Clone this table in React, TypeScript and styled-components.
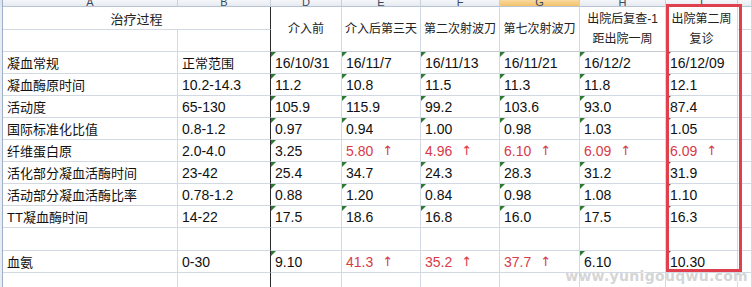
import React from "react";
import styled, { createGlobalStyle, css } from "styled-components";

const Global = createGlobalStyle`
  html, body { margin: 0; padding: 0; background: #fff; }
  body { font-family: "Liberation Sans", "Noto Sans CJK SC", sans-serif; }
`;

const GRID = "#d3d9e3";

const Sheet = styled.div`
  position: relative;
  display: grid;
  grid-template-columns: 3px 175px 93px 71px 79px 79px 80px 86px 72px 1fr;
  grid-template-rows: 7px 23px 22px repeat(8, 22px) 23px 22px 22px;
  width: 752px;
  height: 287px;
  overflow: hidden;
  background: #fff;
  color: #111;
`;

const Strip = styled.div<{ $corner?: boolean }>`
  background: ${(p) => (p.$corner ? "#dfe5ee" : "#e9edf3")};
  border-right: 1px solid #9eb0c7;
  box-sizing: border-box;
`;

const ColHead = styled.div<{ $active?: boolean }>`
  box-sizing: border-box;
  overflow: hidden;
  display: flex;
  align-items: flex-end;
  justify-content: center;
  font-size: 11px;
  line-height: 11px;
  color: #3a4a5e;
  border-right: 1px solid #c9d1dc;
  border-bottom: 1px solid #b7c4d6;
  background: ${(p) =>
    p.$active
      ? "linear-gradient(#f9d9a0, #f3c26a)"
      : "linear-gradient(#f4f6f9, #e6eaf0)"};
  span {
    margin-bottom: -2px;
  }
`;

const Cell = styled.div<{ $cjk?: boolean; $dark?: boolean; $center?: boolean }>`
  position: relative;
  box-sizing: border-box;
  display: flex;
  align-items: center;
  justify-content: ${(p) => (p.$center ? "center" : "flex-start")};
  padding: 0 4px;
  white-space: nowrap;
  overflow: hidden;
  border-right: 1px solid ${(p) => (p.$dark ? "#2a2a2a" : GRID)};
  border-bottom: 1px solid ${GRID};
  font-size: ${(p) => (p.$cjk ? "13px" : "14px")};
`;

const Title = styled(Cell)`
  grid-column: span 2;
  justify-content: center;
  font-size: 13px;
  color: #222;
`;

const HeadCell = styled(Cell)`
  grid-row: span 2;
  flex-direction: column;
  justify-content: center;
  align-items: center;
  padding: 0;
  font-size: 12px;
  line-height: 20px;
  color: #222;
  border-bottom-color: #c4c9d1;
`;

const Value = styled(Cell)<{ $flag?: boolean; $high?: boolean }>`
  color: ${(p) => (p.$high ? "#d73a48" : "#111")};
  ${(p) =>
    p.$flag &&
    css`
      &::before {
        content: "";
        position: absolute;
        left: 0;
        top: 0;
        border-top: 5px solid #2e7a34;
        border-right: 5px solid transparent;
      }
    `}
`;

const Arrow = styled.span`
  margin-left: 9px;
  font-family: "DejaVu Sans", sans-serif;
  font-size: 13px;
`;

const Highlight = styled.div`
  position: absolute;
  left: 666px;
  top: 4px;
  width: 76px;
  height: 268px;
  box-sizing: border-box;
  border: 3px solid #e0404e;
  pointer-events: none;
`;

const Watermark = styled.div`
  position: absolute;
  right: 4px;
  bottom: 3px;
  font-family: "DejaVu Sans", sans-serif;
  font-weight: bold;
  font-size: 14px;
  letter-spacing: 0.3px;
  color: rgba(185, 185, 185, 0.6);
  text-shadow: 1px 1px 0 rgba(255, 255, 255, 0.7);
  pointer-events: none;
`;

const letters = ["A", "B", "D", "E", "F", "G", "H", "I", ""];

const heads: string[][] = [
  ["介入前"],
  ["介入后第三天"],
  ["第二次射波刀"],
  ["第七次射波刀"],
  ["出院后复查-1", "距出院一周"],
  ["出院第二周", "复诊"],
];

type Row = { label: string; range: string; values: string[] };

const rows: Row[] = [
  { label: "凝血常规", range: "正常范围", values: ["16/10/31", "16/11/7", "16/11/13", "16/11/21", "16/12/2", "16/12/09"] },
  { label: "凝血酶原时间", range: "10.2-14.3", values: ["11.2", "10.8", "11.5", "11.3", "11.8", "12.1"] },
  { label: "活动度", range: "65-130", values: ["105.9", "115.9", "99.2", "103.6", "93.0", "87.4"] },
  { label: "国际标准化比值", range: "0.8-1.2", values: ["0.97", "0.94", "1.00", "0.98", "1.03", "1.05"] },
  { label: "纤维蛋白原", range: "2.0-4.0", values: ["3.25", "5.80↑", "4.96↑", "6.10↑", "6.09↑", "6.09↑"] },
  { label: "活化部分凝血活酶时间", range: "23-42", values: ["25.4", "34.7", "24.3", "28.3", "31.2", "31.9"] },
  { label: "活动部分凝血活酶比率", range: "0.78-1.2", values: ["0.88", "1.20", "0.84", "0.98", "1.08", "1.10"] },
  { label: "TT凝血酶时间", range: "14-22", values: ["17.5", "18.6", "16.8", "16.0", "17.5", "16.3"] },
  { label: "", range: "", values: ["", "", "", "", "", ""] },
  { label: "血氨", range: "0-30", values: ["9.10", "41.3↑", "35.2↑", "37.7↑", "6.10", "10.30"] },
  { label: "", range: "", values: ["", "", "", "", "", ""] },
];

const isCjk = (s: string) => /[\u4e00-\u9fff]/.test(s);

export default function App() {
  return (
    <>
      <Global />
      <Sheet>
        <Strip $corner />
        {letters.map((l, i) => (
          <ColHead key={"h" + i} $active={l === "G"}>
            <span>{l}</span>
          </ColHead>
        ))}

        <Strip />
        <Title $dark>治疗过程</Title>
        {heads.map((h, i) => (
          <HeadCell key={"hd" + i}>
            {h.map((line) => (
              <span key={line}>{line}</span>
            ))}
          </HeadCell>
        ))}
        <Cell />

        <Strip />
        <Cell />
        <Cell $dark />
        <Cell />

        {rows.map((r, ri) => (
          <React.Fragment key={"r" + ri}>
            <Strip />
            <Cell $cjk={isCjk(r.label)}>{r.label}</Cell>
            <Cell $dark $cjk={isCjk(r.range)}>{r.range}</Cell>
            {r.values.map((v, vi) => {
              const high = v.endsWith("↑");
              const text = high ? v.slice(0, -1) : v;
              return (
                <Value key={vi} $high={high} $flag={v !== "" && !high}>
                  {text}
                  {high && <Arrow>↑</Arrow>}
                </Value>
              );
            })}
            <Cell />
          </React.Fragment>
        ))}
        <Highlight />
        <Watermark>www.yunigouqwu.com</Watermark>
      </Sheet>
    </>
  );
}
